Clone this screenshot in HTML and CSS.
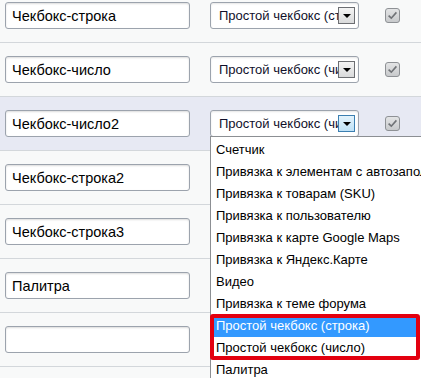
FILE: index.html
```html
<!DOCTYPE html>
<html lang="ru">
<head>
    <meta charset="UTF-8">
    <meta name="viewport" content="width=device-width, initial-scale=1.0">
    <title>Свойства</title>
    <link rel="stylesheet" href="styles.css">
</head>
<body>
    <div class="props">
        <div class="row">
            <input class="name" type="text" value="Чекбокс-строка">
            <div class="select">
                <span class="select-text">Простой чекбокс (строка)</span>
                <span class="arrow"></span>
            </div>
            <span class="check"><svg width="15" height="15" viewBox="0 0 15 15"><defs><linearGradient id="cb" x1="0" y1="0" x2="0" y2="1"><stop offset="0" stop-color="#e4e5e6"/><stop offset="1" stop-color="#c7c9cb"/></linearGradient></defs><rect x="0.5" y="0.5" width="14" height="14" rx="2.5" fill="url(#cb)" stroke="#8e9195"/><path d="M3.6 7.6 L6.3 10.2 L11.4 4.4" fill="none" stroke="#6f7276" stroke-width="1.6"/></svg></span>
        </div>
        <div class="row">
            <input class="name" type="text" value="Чекбокс-число">
            <div class="select">
                <span class="select-text">Простой чекбокс (число)</span>
                <span class="arrow"></span>
            </div>
            <span class="check"><svg width="15" height="15" viewBox="0 0 15 15"><rect x="0.5" y="0.5" width="14" height="14" rx="2.5" fill="url(#cb)" stroke="#8e9195"/><path d="M3.6 7.6 L6.3 10.2 L11.4 4.4" fill="none" stroke="#6f7276" stroke-width="1.6"/></svg></span>
        </div>
        <div class="row active">
            <input class="name" type="text" value="Чекбокс-число2">
            <div class="select open">
                <span class="select-text">Простой чекбокс (число)</span>
                <span class="arrow"></span>
                <div class="dropdown">
                    <div class="option">Счетчик</div>
                    <div class="option">Привязка к элементам с автозаполнением</div>
                    <div class="option">Привязка к товарам (SKU)</div>
                    <div class="option">Привязка к пользователю</div>
                    <div class="option">Привязка к карте Google Maps</div>
                    <div class="option">Привязка к Яндекс.Карте</div>
                    <div class="option">Видео</div>
                    <div class="option">Привязка к теме форума</div>
                    <div class="marked">
                        <div class="option selected">Простой чекбокс (строка)</div>
                        <div class="option">Простой чекбокс (число)</div>
                    </div>
                    <div class="option">Палитра</div>
                </div>
            </div>
            <span class="check"><svg width="15" height="15" viewBox="0 0 15 15"><rect x="0.5" y="0.5" width="14" height="14" rx="2.5" fill="url(#cb)" stroke="#8e9195"/><path d="M3.6 7.6 L6.3 10.2 L11.4 4.4" fill="none" stroke="#6f7276" stroke-width="1.6"/></svg></span>
        </div>
        <div class="row">
            <input class="name" type="text" value="Чекбокс-строка2">
        </div>
        <div class="row">
            <input class="name" type="text" value="Чекбокс-строка3">
        </div>
        <div class="row">
            <input class="name" type="text" value="Палитра">
        </div>
        <div class="row">
            <input class="name" type="text" value="">
        </div>
    </div>
</body>
</html>
```

FILE: styles.css
```css
html {
    height: 100%;
}
body {
    margin: 0;
    padding: 0;
    min-height: 100%;
    overflow: hidden;
    background-color: #f8f9f9;
    font-family: "Liberation Sans", Arial, sans-serif;
    font-size: 13px;
    color: #000;
}
.props {
    padding-top: 1px;
    margin-top: -12px;
}
.row {
    display: flex;
    align-items: center;
    height: 53px;
    padding-left: 5px;
    border-bottom: 1px solid #d3d7db;
}
.row.active {
    background-color: #e7e9f3;
}
.name {
    box-sizing: border-box;
    width: 185px;
    height: 27px;
    margin: 0;
    padding: 0 6px;
    border: 1px solid #9ca3ad;
    border-radius: 3px;
    background: #fff;
    box-shadow: inset 0 1px 2px rgba(0, 0, 0, 0.14);
    font-family: inherit;
    font-size: 14.5px;
    color: #000;
    outline: none;
}
.select {
    position: relative;
    box-sizing: border-box;
    display: flex;
    align-items: center;
    width: 149px;
    height: 27px;
    margin-left: 20px;
    border: 1px solid #9ca3ad;
    border-radius: 3px;
    background: #fff;
    box-shadow: inset 0 1px 2px rgba(0, 0, 0, 0.1);
}
.select-text {
    flex: 1;
    padding-left: 8px;
    overflow: hidden;
    white-space: nowrap;
    color: #10102a;
}
.arrow {
    position: relative;
    box-sizing: border-box;
    width: 17px;
    height: 17px;
    margin-right: 3px;
    border: 1px solid #6c6e72;
    background: linear-gradient(#f4f4f4, #d9dadb);
}
.arrow::after {
    content: "";
    position: absolute;
    left: 4px;
    top: 6px;
    border-left: 4px solid transparent;
    border-right: 4px solid transparent;
    border-top: 4px solid #000;
}
.open .arrow {
    border-color: #3c7fb1;
    background: linear-gradient(#e3f3fc, #bfe1f6);
}
.check {
    display: flex;
    margin-left: 26px;
}
/* open list runs off the right and bottom edge of the frame */
.dropdown {
    position: absolute;
    top: 25px;
    left: -1px;
    z-index: 10;
    box-sizing: border-box;
    width: 211px;
    height: 242px;
    padding-top: 2px;
    background: #fff;
    border: 1px solid #8c8f93;
    border-right: none;
    border-bottom: none;
}
.option {
    height: 22px;
    line-height: 22px;
    padding-left: 5px;
    white-space: nowrap;
    overflow: hidden;
}
.marked {
    width: 208px;
    outline: 4px solid #e3000f;
    outline-offset: -3px;
    border-radius: 2px;
}
.option.selected {
    background: #3399ff;
    color: #fff;
}
```
